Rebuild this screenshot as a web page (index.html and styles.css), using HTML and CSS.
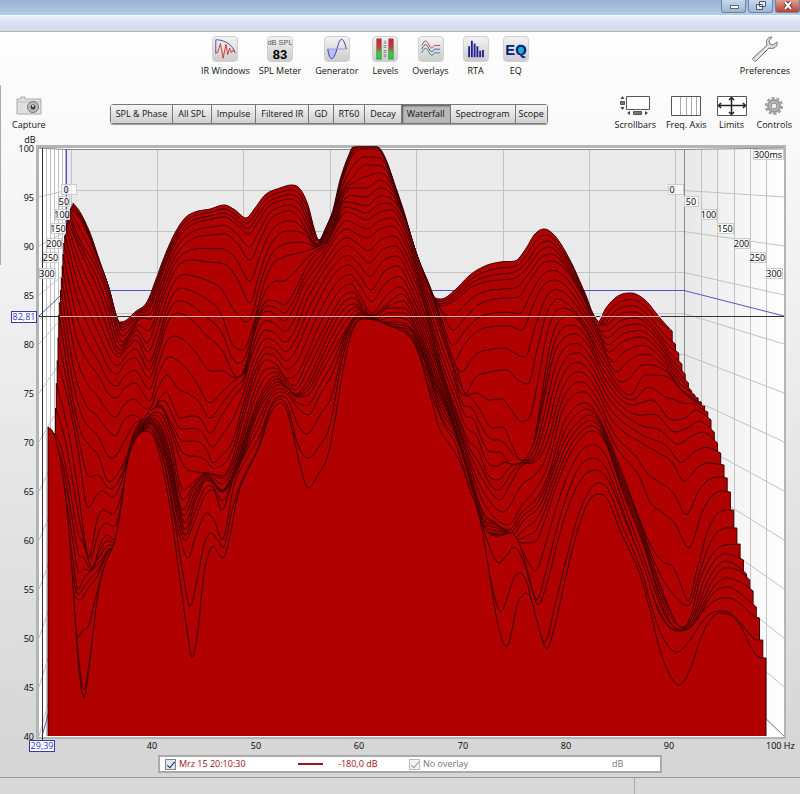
FILE: index.html
```html
<!DOCTYPE html>
<html lang="en">
<head>
  <meta charset="UTF-8">
  <meta name="viewport" content="width=device-width, initial-scale=1.0">
  <title>Waterfall</title>
  <link rel="stylesheet" href="styles.css">
</head>
<body>
  <div class="app">
    <header class="titlebar">
      <button class="win-btn" aria-label="Minimize"><svg width="24" height="12" viewBox="0 0 24 12"><rect x="8.500" y="5.500" width="8" height="3" fill="#fff" stroke="#667"/></svg></button>
      <button class="win-btn" aria-label="Restore"><svg width="24" height="12" viewBox="0 0 24 12"><path d="M10.500 1.500h6v5h-6zM7.500 4.500h6v5h-6z" fill="#e8edf5" stroke="#556"/></svg></button>
      <button class="win-btn close" aria-label="Close"><svg width="24" height="12" viewBox="0 0 24 12"><path d="M9 2l6 7M15 2l-6 7" stroke="#633" stroke-width="4"/><path d="M9 2l6 7M15 2l-6 7" stroke="#fff" stroke-width="2"/></svg></button>
    </header>
    <div class="menubar"></div>

    <!-- Main tools -->
    <div class="toolbar">
      <div class="tools">
        <button class="tool"><svg class="icon" viewBox="0 0 26 26"><path d="M3 18V3C10 3 20 6 24 17" fill="none" stroke="#4848a8"/><path d="M3 17h2l3-10 3 16 3-15 2 11 2-7 2 5 2-3 2 3" fill="none" stroke="#c33"/></svg>IR Windows</button>
        <button class="tool spl"><svg class="icon" viewBox="0 0 26 26"><text x="13" y="9" font-size="8" text-anchor="middle" fill="#555">dB SPL</text><text x="13" y="24" font-size="14" font-weight="bold" text-anchor="middle">83</text></svg>SPL Meter</button>
        <button class="tool"><svg class="icon" viewBox="0 0 26 26"><path d="M3 13c2 14 6 14 10 0z" fill="#b9bdf3"/><path d="M3 13c2 14 6 14 10 0c3-14 7-14 10 0" fill="none" stroke="#3030a0"/><path d="M3 13h20" stroke="#9a9ad8"/></svg>Generator</button>
        <button class="tool"><svg class="icon" viewBox="0 0 26 26"><defs><linearGradient id="lvl" x2="0" y2="1"><stop stop-color="#f01040"/><stop offset=".4" stop-color="#c04030"/><stop offset=".7" stop-color="#30d040"/><stop offset="1" stop-color="#10e020"/></linearGradient></defs><path d="M4 2h5v22H4zM17 2h5v22h-5z" fill="url(#lvl)" stroke="#555" stroke-width=".6"/><path d="M13 4v20" stroke="#777" stroke-width="3" stroke-dasharray="1 1 1 2"/></svg>Levels</button>
        <button class="tool"><svg class="icon" viewBox="0 0 26 26"><g fill="none"><path d="M3 9c4-8 6-4 8 0s4 3 5 1 4 0 7-1" stroke="#c34"/><path d="M3 13c4-8 6-4 8 0s4 3 5 1 4 0 7-1" stroke="#44a"/><path d="M3 17c4-8 6-4 8 0s4 3 5 1 4 0 7-1" stroke="#286"/></g></svg>Overlays</button>
        <button class="tool"><svg class="icon" viewBox="0 0 26 26"><path d="M5.500 22V10M8.500 22V4M11.500 22V7M14.500 22V10M17.500 22V15M20.500 22v-8" stroke="#202090" stroke-width="2"/></svg>RTA</button>
        <button class="tool"><svg class="icon" viewBox="0 0 26 26"><circle cx="18" cy="13" r="5" fill="#20b0c8"/><text x="13" y="19" font-size="16" font-weight="bold" text-anchor="middle" fill="#002080">EQ</text></svg>EQ</button>
      </div>
      <button class="tool"><svg class="icon plain" viewBox="0 0 26 26"><path d="M20 1c-4 0-7 3-5 8L1 22c-1 2 1 4 3 3L17 12c5 2 9-2 8-6l-4 3-3-1-1-3z" fill="#d8d8d8" stroke="#777"/><path d="M4 23L17 10" stroke="#fff"/></svg>Preferences</button>
    </div>

    <!-- Graph selection and view options -->
    <div class="graphbar">
      <button class="tool capture"><svg class="small" viewBox="0 0 30 20"><path d="M3 3h4V1h4v2h16v15H3z" fill="#e0e0e0" stroke="#aaa"/><path d="M3 6h24" stroke="#bbb"/><circle cx="19" cy="11" r="5.500" fill="#bbb" stroke="#777"/><circle cx="19" cy="11" r="2.500" fill="#444"/><circle cx="19" cy="10" r="1" fill="#eee"/></svg>Capture</button>
      <nav class="tabs">
        <button>SPL &amp; Phase</button><button>All SPL</button><button>Impulse</button><button>Filtered IR</button><button>GD</button><button>RT60</button><button>Decay</button><button class="active">Waterfall</button><button>Spectrogram</button><button>Scope</button>
      </nav>
      <div class="options">
        <button class="tool"><svg class="small" viewBox="0 0 30 20"><path d="M6.500.500h23v13h-23z" fill="#fff" stroke="#555"/><path d="M2.500 0l2 3h-4zM2.500 14l2-3h-4zM7 17l3-2v4zM28 17l-3-2v4z" fill="#444"/><path d="M.500 5.500h4v3h-4zM13.500 15.500h8v3h-8z" fill="#777" stroke="#555"/></svg>Scrollbars</button>
        <button class="tool"><svg class="small" viewBox="0 0 30 20"><path d="M.500.500h29v19H.500z" fill="#fff" stroke="#555"/><path d="M9.500 1v18M15.500 1v18M20.500 1v18M25.500 1v18" stroke="#aaa"/></svg>Freq. Axis</button>
        <button class="tool"><svg class="small" viewBox="0 0 30 20"><path d="M.500.500h29v19H.500z" fill="#fff" stroke="#555"/><path d="M14.500 2v16M2 9.500h26M12 4l2.500-2.500L17 4M12 16l2.500 2.500L17 16M4 7L1.500 9.500 4 12M26 7l2.500 2.500L26 12" fill="none" stroke="#222" stroke-width="1.500"/></svg>Limits</button>
        <button class="tool"><svg class="small" viewBox="0 0 30 20"><circle cx="15" cy="10" r="8" fill="none" stroke="#999" stroke-width="2" stroke-dasharray="3 2"/><circle cx="15" cy="10" r="6" fill="#bbb" stroke="#999" stroke-width="2"/><circle cx="15" cy="10" r="3" fill="#eee" stroke="#888"/></svg>Controls</button>
      </div>
    </div>

    <svg class="chart" id="chart" viewBox="0 132 800 622">
      <defs>
        <linearGradient id="wall"><stop stop-color="#e8e8e8"/><stop offset="1" stop-color="#fff"/></linearGradient>
      </defs>
      <rect x="37.500" y="146.500" width="747" height="591" fill="none" stroke="#b4b4b4" stroke-width="3"/>
      <rect x="39" y="148" width="745" height="589" fill="#fff"/>
      <path d="M66 149H684V641H66z" fill="#eaeaea"/>
      <path d="M684 149L783 148V736L684 641z" fill="url(#wall)"/>
      <g id="grid"></g>
      <g id="slices"></g>
      <path class="cursor" d="M39 316.500H784M42.500 148V740"/>
      <path class="cursor-red" d="M60 316.500H117M131 316.500H596M600 316.500H661"/>
      <g id="labels"></g>
    </svg>

    <footer class="legend">
      <label class="trace"><input type="checkbox" checked>Mrz 15 20:10:30</label>
      <span class="swatch"></span>
      <span class="level">-180,0 dB</span>
      <label class="overlay"><input type="checkbox" checked disabled>No overlay</label>
      <span class="unit">dB</span>
    </footer>
    <div class="statusbar"><span></span><span></span></div>
  </div>
  <script src="waterfall.js"></script>
</body>
</html>
```
FILE: styles.css
```css
* { box-sizing: border-box; }
body {
  margin: 0;
  font-family: "Open Sans", "Noto Sans", sans-serif;
  font-size: 9px;
  line-height: 12px;
  color: #111;
}
.app {
  min-height: 100vh;
  display: flex;
  flex-direction: column;
  background:
    linear-gradient(#aaa, #aaa) 0 85px / 1px 180px no-repeat,
    linear-gradient(#fff, #fafafa 15%, #d6d6d6 95%);
}
button {
  font: inherit;
  color: inherit;
  border: 0;
  padding: 0;
  background: none;
}

/* Window frame */
.titlebar {
  height: 16px;
  display: flex;
  justify-content: flex-end;
  gap: 2px;
  background: linear-gradient(#98b2d0, #b3cee6);
  border-bottom: 1px solid #f4f8fc;
}
.win-btn {
  width: 25px;
  height: 13px;
  border: 1px solid #6d86a5;
  border-top: 0;
  border-radius: 0 0 3px 3px;
  background: linear-gradient(#c7d9ec, #9bb8d6);
}
.win-btn svg { display: block; }
.win-btn.close { background: linear-gradient(#e0a090, #c04030); }
.menubar {
  height: 16px;
  background: linear-gradient(#f0f2fa, #dde1f1 40%, #d5daee);
  border-bottom: 1px solid #b5b5b5;
}

/* Toolbars */
.toolbar {
  display: flex;
  justify-content: space-between;
  align-items: flex-start;
  min-height: 61px;
  padding: 4px 10px 0 25%;
}
.tools { display: flex; gap: 14px; padding-left: 1px; }
.tool {
  display: flex;
  flex-direction: column;
  align-items: center;
  gap: 3px;
  white-space: nowrap;
}
.spl { margin-left: -5px; }
.icon {
  width: 26px;
  height: 26px;
  border: 1px solid #d0d0d0;
  border-radius: 4px;
  background: linear-gradient(#f2f2f2, #ccc);
  font-family: "Liberation Sans", sans-serif;
}
.icon.plain { border: 0; background: none; }
.small { width: 30px; height: 20px; }
.graphbar {
  display: flex;
  align-items: flex-start;
  min-height: 39px;
  padding: 3px 8px 0 12px;
}
.tabs {
  display: flex;
  margin: 8px auto 0 64px;
  border: 1px solid #777;
  border-radius: 3px;
  box-shadow: 0 1px 1px #999;
}
.tabs button {
  height: 18px;
  padding: 0 5px;
  border-right: 1px solid #777;
  background: linear-gradient(#f6f6f6, #cfcfcf);
}
.tabs button:last-child { border-right: 0; padding: 0 3px; }
.tabs .active {
  background: #b8b8b8;
  box-shadow: inset 1px 1px 2px #555;
}
.options { display: flex; gap: 10px; }

/* Chart */
.chart {
  display: block;
  width: 100%;
  font-size: 9px;
}
.grid { fill: none; stroke: #c2c2c2; }
.edge { fill: none; stroke: #888; }
.blue { fill: none; stroke: #5555c0; }
.slice { fill: #b00000; stroke: #3c0000; stroke-width: 1; }
.cursor { fill: none; stroke: #333; }
.cursor-red { fill: none; stroke: #d0b8a8; }
.tag { fill: #fff; fill-opacity: .7; stroke: #ccc; }
.value { fill: #fff; stroke: #3838b0; }
.value-text { fill: #3030c0; }

/* Legend */
.legend {
  display: flex;
  align-items: center;
  width: 63%;
  height: 18px;
  margin: 1px auto 0 158px;
  padding: 0 5px;
  background: #fff;
  border: 2px solid #aaa;
  color: #a01020;
}
.legend label { display: flex; align-items: center; gap: 3px; }
.legend input {
  appearance: none;
  width: 11px;
  height: 11px;
  margin: 0;
  border: 1px solid #789;
  background: #dde6f2;
}
.legend input::after {
  content: "";
  display: block;
  width: 3px;
  height: 7px;
  margin-left: 3px;
  border: solid #224;
  border-width: 0 1px 1px 0;
  transform: rotate(40deg);
}
.legend input:disabled { border-color: #bbb; background: #f4f4f4; }
.legend input:disabled::after { border-color: #999; }
.overlay, .unit { color: #777; }
.trace { width: 133px; }
.swatch { width: 25px; border-top: 2px solid #a01020; }
.level { width: 71px; margin-left: 15px; }
.overlay { width: 203px; }
.statusbar {
  flex: 1;
  display: flex;
  margin-top: 4px;
  border-top: 1px solid #999;
  background: #d8d8d8;
}
.statusbar span:first-child { width: 635px; border-right: 1px solid #aaa; }
```
FILE: waterfall.js
```js
(function () {
  const COUNT = 30;
  const BASE = 736;
  const TOP = 147;

  // traced slices, index => "x y" knots
  const keys = {
    0: '73 203,80 212,90 233,100 262,110 292,116 316,119 322,125 321,135 312,147 302,155 282,165 255,175 233,185 218,195 212,210 209,224 205,235 210,246 218,255 208,265 195,280 188,292 185,300 189,308 205,314 228,319 241,327 225,333 210,340 180,350 152,356 140,366 134,375 143,384 155,395 185,405 215,415 250,425 278,434 297,441 299,455 290,470 275,485 266,500 262,515 261,525 250,535 234,544 229,555 236,570 260,585 293,598 322,606 308,618 296,631 293,645 300,660 318,669 328',
    3: '70 208,82 222,95 252,108 285,117 318,122 330,130 325,140 314,150 308,160 280,172 250,184 231,196 223,212 219,224 217,236 224,249 234,258 222,268 207,280 201,290 199,300 205,308 222,317 244,326 228,334 212,342 182,350 160,362 149,378 150,390 172,400 205,415 250,430 290,442 306,455 300,470 288,485 282,500 280,515 278,527 268,540 251,550 247,562 258,580 288,598 325,606 325,618 315,635 312,652 325,668 345,679 353',
    5: '69 212,80 240,95 265,108 297,117 332,122 342,132 330,141 318,151 319,161 290,172 262,184 245,197 237,212 235,224 234,237 243,250 260,260 240,270 220,280 213,290 211,300 219,308 233,317 246,326 232,334 215,342 192,352 178,366 165,382 166,392 182,402 208,416 252,430 288,442 312,453 330,465 318,478 305,490 300,505 298,518 297,530 280,542 264,552 261,565 269,580 292,599 330,607 338,620 328,638 324,655 336,672 360,686 374',
    7: '67 218,80 250,93 278,105 308,116 345,120 350,130 337,137 330,147 343,156 322,166 290,178 266,192 260,208 262,224 264,237 278,250 303,259 275,268 250,278 235,288 231,300 232,308 238,316 247,326 236,334 222,343 197,350 188,366 188,380 180,392 190,404 215,418 258,432 292,443 330,453 362,464 345,476 332,490 327,508 326,522 330,533 305,543 286,555 280,568 288,580 305,600 338,609 352,622 342,642 337,660 352,678 376,692 391',
    9: '66 228,80 275,93 305,104 332,113 352,119 357,127 348,136 340,149 362,158 340,168 305,180 288,194 292,208 300,220 312,233 345,243 350,252 330,262 290,272 265,284 257,295 254,306 251,315 248,325 242,335 225,344 202,354 203,366 206,380 196,392 199,404 218,420 265,435 305,448 345,458 372,465 394,475 378,490 372,506 370,518 380,528 384,537 350,546 315,558 299,570 306,582 320,602 350,617 372,627 362,645 354,663 365,684 392,698 398',
    11: '64 243,78 300,90 330,100 350,110 370,117 374,126 362,135 358,149 378,158 355,168 322,178 313,192 320,206 335,222 350,237 377,243 372,250 350,258 318,268 300,276 301,284 305,294 292,304 272,314 256,326 245,336 226,346 212,356 215,366 220,378 213,391 210,404 228,420 275,438 325,452 365,462 395,470 397,480 410,492 428,503 427,512 445,522 462,532 450,541 400,550 345,560 320,572 316,584 328,604 365,630 395,645 375,665 376,685 394,702 406',
    13: '62 265,76 335,88 362,98 375,108 393,116 398,125 388,135 383,150 401,158 375,169 357,182 364,195 380,210 403,222 392,237 378,245 372,250 350,258 322,267 311,276 315,284 321,294 308,304 285,316 268,328 250,338 235,347 229,357 234,367 238,380 229,392 226,405 243,422 290,440 350,455 390,465 415,474 420,482 440,490 452,500 452,508 462,513 466,522 462,535 440,545 395,554 355,564 338,575 334,588 345,607 382,632 405,652 400,672 420,685 418,696 410,712 420',
    15: '61 290,74 370,86 405,96 415,106 428,115 436,124 420,134 415,142 420,151 415,160 398,166 392,180 418,192 416,200 418,210 433,222 415,235 395,243 385,252 355,266 330,275 333,285 342,295 330,306 302,318 280,330 262,340 249,348 246,358 253,369 263,382 250,396 246,408 265,424 305,442 370,458 415,468 440,478 450,488 475,498 480,510 467,522 462,535 455,546 420,556 380,567 357,578 353,590 364,610 400,640 425,660 430,678 444,692 436,703 432,718 443',
    17: '59 315,72 395,80 430,90 446,98 455,109 482,120 470,127 455,135 430,150 415,160 405,172 425,183 441,196 441,207 450,213 463,222 455,233 440,243 405,254 368,267 347,276 350,286 361,296 350,307 325,318 302,330 280,341 268,349 265,359 274,371 290,384 272,398 266,410 285,426 325,445 385,462 435,475 465,488 488,500 500,510 485,522 465,535 462,548 440,560 395,570 376,580 372,594 385,612 420,640 442,657 452,672 462,684 481,697 468,708 463,724 465',
    19: '57 360,68 400,78 450,88 508,96 496,102 491,113 497,122 480,130 450,140 425,151 410,160 407,170 428,183 465,196 472,205 473,213 474,222 476,232 460,243 420,254 382,266 360,276 364,287 378,297 374,308 352,318 328,330 305,342 288,351 284,361 298,372 313,386 296,400 287,412 303,428 343,448 400,465 450,480 495,492 515,508 525,522 505,535 490,548 465,562 412,574 395,584 392,598 408,615 445,640 478,650 502,663 513,675 524,689 548,702 512,714 494,722 491,731 492',
    20: '56 382,68 430,78 490,89 557,97 520,103 510,113 514,120 500,130 455,140 428,150 415,158 412,170 435,183 490,196 480,207 473,222 478,232 465,244 428,254 392,266 369,275 368,283 376,294 386,307 362,319 338,331 315,343 296,353 292,362 305,372 315,387 304,402 294,414 312,430 355,450 410,468 465,482 510,494 522,509 530,522 512,537 498,550 470,563 425,575 407,585 403,598 416,618 462,640 520,652 548,663 562,673 567,681 585,688 601,697 570,708 530,718 513,728 510,734 510',
    22: '55 433,62 450,70 490,78 533,84 545,92 568,100 545,107 535,115 540,122 505,131 455,141 428,149 418,157 420,168 445,183 510,193 490,207 475,222 490,232 475,244 440,256 405,266 385,276 376,285 385,296 394,308 380,320 354,332 328,345 308,356 304,366 316,376 317,388 308,404 308,416 327,432 370,452 420,470 480,484 520,496 525,512 535,524 520,540 505,552 475,565 440,578 422,589 415,602 428,620 475,640 525,655 570,668 605,680 628,690 618,700 580,712 555,722 546,733 545,740 545',
    25: '52 470,60 475,67 520,73 560,78 590,84 578,92 570,100 562,108 550,115 545,122 510,132 455,142 430,150 422,158 430,168 460,180 515,185 530,196 500,207 480,222 492,233 480,246 445,258 412,268 395,278 385,287 388,297 397,308 395,320 375,333 352,347 328,360 312,370 316,382 322,394 322,408 325,420 347,436 390,455 430,470 485,484 530,498 534,514 540,522 543,535 542,545 520,555 490,568 458,580 439,592 431,604 440,622 490,645 550,660 600,672 625,680 630,692 625,703 600,713 580,725 568,738 570,750 580',
    27: '51 470,60 478,67 530,73 590,80 600,88 588,98 575,108 552,116 542,122 512,132 457,142 432,150 424,158 435,168 470,178 520,185 541,195 520,205 495,213 490,222 510,233 480,246 452,260 425,270 400,280 392,288 395,298 408,308 415,320 395,333 372,346 335,360 316,372 319,385 325,398 327,412 332,424 360,440 408,458 440,472 490,486 530,498 536,511 533,521 548,530 580,537 600,545 575,555 535,568 492,580 466,593 458,606 468,622 508,642 565,658 608,670 627,682 630,697 622,708 600,718 589,728 587,742 595,757 607',
    28: '50 460,60 475,68 530,75 620,77 638,83 630,88 627,95 600,103 570,115 543,122 513,132 458,142 433,149 426,158 440,168 480,178 530,188 558,196 535,207 513,215 522,222 540,234 485,247 458,260 435,271 405,280 396,288 400,298 425,307 434,320 415,332 395,344 345,358 318,372 319,386 325,400 329,414 338,426 372,442 418,458 443,473 492,487 540,499 563,507 555,514 547,523 560,532 590,538 605,548 580,558 540,570 502,583 477,596 470,608 480,625 520,645 570,658 610,670 628,680 631,692 626,704 610,716 600,728 598,742 605,752 615,759 618',
    29: '49 450,56 450,63 490,70 550,76 630,84 690,91 650,98 600,106 565,116 541,122 514,133 455,142 434,148 428,156 438,165 468,176 530,184 580,190 607,197 580,204 545,211 533,218 540,223 548,232 510,242 480,258 448,270 410,280 399,288 408,298 445,308 458,320 445,330 425,342 360,354 325,364 318,378 320,392 326,404 330,416 345,428 385,444 425,456 445,470 490,484 545,494 595,501 612,508 595,514 578,520 573,527 583,536 620,545 642,555 605,566 560,578 516,588 493,598 483,608 489,622 525,642 573,654 615,666 643,677 652,690 640,702 622,714 612,724 611,736 618,748 632,756 640,763 640',
    30: '48 427,54 434,61 465,68 520,74 600,78 660,84 698,90 660,97 600,105 565,115 540,120 515,127 465,135 440,147 431,155 440,163 470,172 520,180 580,187 630,192 658,198 630,203 580,208 555,213 546,218 553,223 558,228 545,238 495,248 470,260 445,270 415,276 405,280 403,286 408,292 430,300 465,308 488,318 475,328 455,335 420,343 370,352 332,362 319,375 320,390 326,400 330,412 340,420 358,430 395,440 430,450 445,460 462,470 490,480 520,488 565,495 610,502 640,507 647,512 630,517 605,523 595,527 593,532 602,538 625,547 649,555 625,565 580,575 540,585 509,592 497,599 494,608 500,620 530,640 575,650 610,660 650,670 675,679 685,690 670,700 640,710 620,720 613,730 615,740 625,750 645,760 657,766 657'
  };
  const rightY = [328, 331, 344, 353, 364, 374, 383, 391, 395, 398, 402, 406, 412, 420, 432, 443,
    453, 465, 478, 492, 510, 528, 544, 560, 574, 580, 591, 607, 618, 640, 658];

  const left = i => 73 - i * 25 / COUNT;
  const right = i => 669 + i * 97 / COUNT;

  // cubic through the knots, flat at peaks and valleys
  function curve(str) {
    const p = str.split(',').map(s => s.split(' ').map(Number));
    const n = p.length;
    const d = [];
    const m = [];
    for (let k = 0; k < n - 1; k++) d.push((p[k + 1][1] - p[k][1]) / (p[k + 1][0] - p[k][0]));
    for (let k = 0; k < n; k++) {
      const a = d[k - 1];
      const b = d[k];
      if (a === undefined || b === undefined) m.push(a === undefined ? b : a);
      else if (a * b <= 0) m.push(0);
      else m.push(Math.sign(a) * Math.min(Math.abs(a + b) / 2, 3 * Math.abs(a), 3 * Math.abs(b)));
    }
    return x => {
      if (x <= p[0][0]) return p[0][1];
      if (x >= p[n - 1][0]) return p[n - 1][1];
      let k = 0;
      while (x > p[k + 1][0]) k++;
      const h = p[k + 1][0] - p[k][0];
      const t = (x - p[k][0]) / h;
      const t2 = t * t;
      const t3 = t2 * t;
      return (2 * t3 - 3 * t2 + 1) * p[k][1] + (t3 - 2 * t2 + t) * h * m[k] +
        (3 * t2 - 2 * t3) * p[k + 1][1] + (t3 - t2) * h * m[k + 1];
    };
  }

  const index = Object.keys(keys).map(Number).sort((a, b) => a - b);
  const curves = {};
  index.forEach(i => { curves[i] = curve(keys[i]); });
  const at = (i, u) => curves[i](left(i) + u * (right(i) - left(i)));

  let out = '';
  for (let i = 0; i <= COUNT; i++) {
    const b = index.find(k => k >= i);
    const a = b === i ? i : index[index.indexOf(b) - 1];
    const f = a === b ? 0 : (i - a) / (b - a);
    const endShift = rightY[i] - (at(a, 1) * (1 - f) + at(b, 1) * f);
    let d = `M${left(i)} ${BASE}`;
    for (let s = 0; s <= 360; s++) {
      const u = s / 360;
      let y = at(a, u) * (1 - f) + at(b, u) * f;
      if (u > 0.97) y += endShift * (u - 0.97) / 0.03;
      d += `L${(left(i) + u * (right(i) - left(i))).toFixed(1)} ${Math.max(TOP, y).toFixed(1)}`;
    }
    out += `<path class="slice" d="${d}V${BASE}"/>`;
  }
  document.getElementById('slices').innerHTML = out;

  // walls
  let grid = '';
  [157, 243, 330, 416, 503, 589, 675].forEach(x => { grid += `<path class="grid" d="M${x}.5 149V641"/>`; });
  for (let k = 1; k <= 12; k++) {
    const back = 149.5 + 41 * k;
    const front = 148 + 49 * k;
    grid += `<path class="grid" d="M39 ${front}L66 ${back}H684L784 ${front}"/>`;
  }
  [[701, 657], [717, 672], [734, 688], [750, 704], [766, 719]].forEach(([x, y]) => {
    grid += `<path class="grid" d="M${x}.5 149V${y}"/>`;
  });
  [46, 50, 54, 58, 62, 71].forEach(x => { grid += `<path class="grid" d="M${x}.5 149V736"/>`; });
  grid += '<path class="edge" d="M39 148L66 149.500H684L784 148M684.500 149V641L784 736"/>';
  grid += '<path class="blue" d="M39 316L66 290.500H684L784 316M66.500 149V650L42 736"/>';
  grid += '<path class="blue" d="M65.500 149V300" opacity=".5"/>';
  document.getElementById('grid').innerHTML = grid;

  // text
  const text = (x, y, s, anchor = 'middle', cls = '') =>
    `<text x="${x}" y="${y}" text-anchor="${anchor}" class="${cls}">${s}</text>`;
  const box = (x, y, w) => `<rect class="tag" x="${x}.5" y="${y}.5" width="${w}" height="10"/>`;
  const tag = (x, y, w, s) => box(x, y, w) + text(x + w / 2, y + 9, s);
  let labels = text(30, 143, 'dB');
  for (let db = 100; db >= 40; db -= 5) {
    labels += text(34, 152 + Math.round((100 - db) * 9.8), db, 'end');
  }
  [[40, 152], [50, 256], [60, 359], [70, 463], [80, 566], [90, 669]].forEach(([hz, x]) => {
    labels += text(x, 749, hz);
  });
  labels += text(766, 749, '100 Hz', 'start');
  labels += '<rect class="value" x="11.500" y="311.500" width="25" height="11"/>' + text(24, 320, '82,81', 'middle', 'value-text');
  labels += '<rect class="value" x="29.500" y="740.500" width="25" height="11"/>' + text(42, 749, '29,39', 'middle', 'value-text');
  labels += tag(753, 149, 30, '300ms');
  labels += box(61, 184, 15) + text(66, 193, '0');
  [[59, 196, 10], [55, 209, 14], [51, 223, 14], [47, 238, 14], [43, 252, 15], [39, 268, 16]].forEach(([x, y, w], k) => {
    labels += tag(x, y, w, (k + 1) * 50);
  });
  labels += box(668, 184, 15) + text(672, 193, '0');
  [[684, 196, 14], [701, 209, 15], [717, 223, 16], [734, 238, 15], [750, 252, 15], [766, 268, 16]].forEach(([x, y, w], k) => {
    labels += tag(x, y, w, (k + 1) * 50);
  });
  document.getElementById('labels').innerHTML = labels;
})();
```
